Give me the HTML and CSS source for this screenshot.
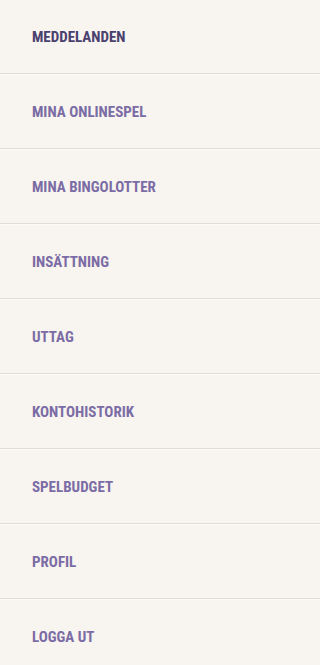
FILE: index.html
```html
<!DOCTYPE html>
<html lang="sv">
<head>
<meta charset="utf-8">
<link rel="stylesheet" href="styles.css">
</head>
<body>
<nav class="menu">
  <a class="item active" href="#">MEDDELANDEN</a>
  <a class="item" href="#">MINA ONLINESPEL</a>
  <a class="item" href="#">MINA BINGOLOTTER</a>
  <a class="item" href="#">INSÄTTNING</a>
  <a class="item" href="#">UTTAG</a>
  <a class="item" href="#">KONTOHISTORIK</a>
  <a class="item" href="#">SPELBUDGET</a>
  <a class="item" href="#">PROFIL</a>
  <a class="item" href="#">LOGGA UT</a>
</nav>
</body>
</html>
```
FILE: styles.css
```css
html, body {
  margin: 0;
  padding: 0;
  background: #f8f4ef;
}
.menu {
  display: flex;
  flex-direction: column;
}
.item {
  display: flex;
  align-items: center;
  height: 73px;
  padding-left: 32px;
  border-top: 1px solid #fdfbf9;
  border-bottom: 1px solid #e2dcd6;
  font-family: Roboto, sans-serif;
  font-stretch: condensed;
  font-weight: bold;
  font-size: 15px;
  color: #7b6ca5;
  text-decoration: none;
}
.item:first-child {
  border-top: 0;
}
.item.active {
  color: #4a416e;
}
```
